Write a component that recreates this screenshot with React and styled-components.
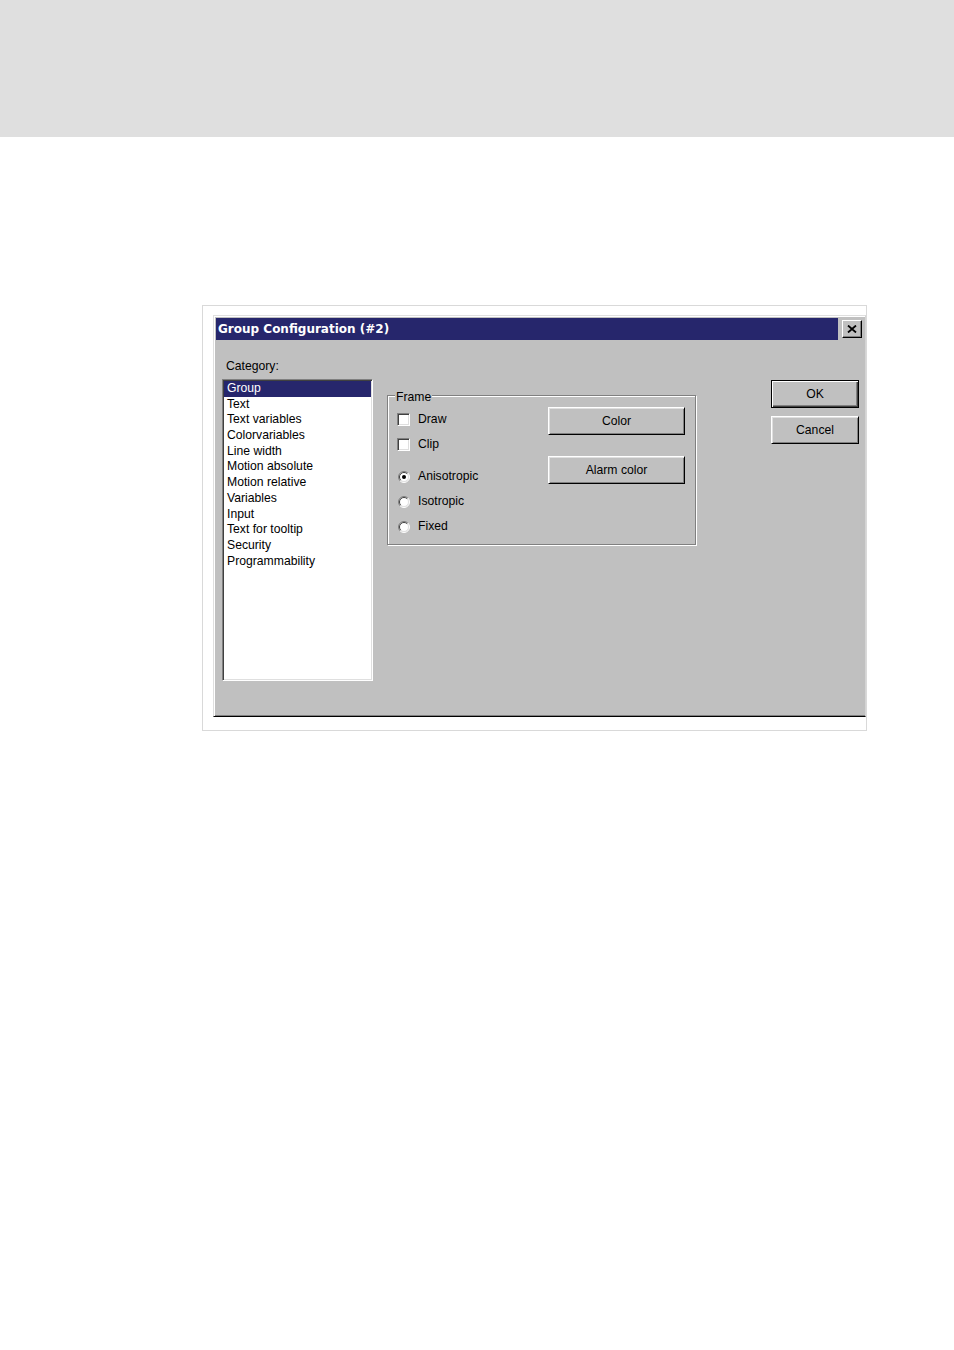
import React from "react";
import styled, { createGlobalStyle } from "styled-components";

const GlobalStyle = createGlobalStyle`
  body {
    margin: 0;
    background: #ffffff;
    font-family: "Liberation Sans", Arial, sans-serif;
  }
`;

// grey band across the top of the page
const Header = styled.div`
  height: 137px;
  background: #dfdfdf;
`;

// the thin frame round the screenshot
const Figure = styled.div`
  margin: 168px 0 0 202px;
  width: 665px;
  box-sizing: border-box;
  border: 1px solid #d9d9d9;
  padding: 9px 0 13px 10px;
`;

const Dialog = styled.div`
  width: 653px;
  height: 402px;
  box-sizing: border-box;
  padding: 2px 2px 1px 2px;
  background: #c0c0c0;
  border: 1px solid;
  border-color: #dfdfdf #d4d4d4 #000 #dfdfdf;
  box-shadow: inset 1px 1px 0 #fff, inset 0 -1px 0 #808080;
`;

const TitleRow = styled.div`
  display: flex;
  align-items: center;
  height: 22px;
  gap: 4px;
`;

const TitleBar = styled.div`
  flex: 1;
  height: 22px;
  line-height: 22px;
  padding-left: 2px;
  background: #26266c;
  color: #fff;
  font-family: "DejaVu Sans", Verdana, sans-serif;
  font-weight: bold;
  font-size: 12px;
`;

const CloseBox = styled.div`
  width: 20px;
  height: 18px;
  margin-right: 1px;
  box-sizing: border-box;
  display: flex;
  align-items: center;
  justify-content: center;
  border: 1px solid;
  border-color: #fff #000 #000 #fff;
  box-shadow: inset -1px -1px 0 #808080;
`;

const Body = styled.div`
  display: flex;
  align-items: flex-start;
  padding: 18px 0 0 6px;
`;

const LeftCol = styled.div`
  width: 151px;
  display: flex;
  flex-direction: column;
  gap: 5px;
`;

const Text = styled.span`
  font-size: 12.2px;
  line-height: 15px;
  color: #000;
`;

const CategoryLabel = styled(Text)`
  padding-left: 4px;
  height: 15px;
  margin-top: 1px;
`;

const ListBox = styled.div`
  height: 302px;
  box-sizing: border-box;
  background: #fff;
  padding: 1px 1px 0;
  border: 1px solid;
  border-color: #808080 #fff #fff #808080;
  box-shadow: inset 1px 1px 0 #404040, inset -1px -1px 0 #dfdfdf;
`;

const ListItem = styled.div`
  height: 15.7px;
  line-height: 15.7px;
  padding-left: 3px;
  font-size: 12.2px;
  color: ${(p) => (p.$selected ? "#fff" : "#000")};
  background: ${(p) => (p.$selected ? "#26266c" : "transparent")};
  white-space: nowrap;
`;

const GroupBox = styled.div`
  margin: 37px 0 0 14px;
  width: 309px;
  box-sizing: border-box;
  border: 1px solid #808080;
  box-shadow: inset 1px 1px 0 #fff, 1px 1px 0 #fff;
  padding: 0 0 5px 9px;
`;

const Legend = styled(Text)`
  display: table;
  margin: -6px 0 0 -2px;
  padding: 0 1px;
  background: #c0c0c0;
`;

const GroupGrid = styled.div`
  display: grid;
  grid-template-columns: 151px 137px;
  margin-top: 2px;
`;

const Options = styled.div`
  display: flex;
  flex-direction: column;
`;

const OptionRow = styled.div`
  height: 25px;
  display: flex;
  align-items: center;
  gap: 8px;
  margin-top: ${(p) => (p.$spaced ? "7px" : "0")};
`;

const CheckBox = styled.span`
  flex-shrink: 0;
  width: 13px;
  height: 13px;
  box-sizing: border-box;
  background: #fff;
  border: 1px solid;
  border-color: #808080 #fff #fff #808080;
  box-shadow: inset 1px 1px 0 #404040, inset -1px -1px 0 #dfdfdf;
`;

const RadioSvg = styled.svg`
  flex-shrink: 0;
  display: block;
  margin-left: 1px;
`;

const Radio = ({ checked }) => (
  <RadioSvg width="12" height="12" viewBox="0 0 12 12">
    <circle cx="6" cy="6" r="5" fill="#fff" />
    <path d="M2.1 9.9 A5.5 5.5 0 0 1 9.9 2.1" fill="none" stroke="#808080" />
    <path d="M9.9 2.1 A5.5 5.5 0 0 1 2.1 9.9" fill="none" stroke="#fff" />
    <path d="M2.8 9.2 A4.5 4.5 0 0 1 9.2 2.8" fill="none" stroke="#404040" />
    <path d="M9.2 2.8 A4.5 4.5 0 0 1 2.8 9.2" fill="none" stroke="#dfdfdf" />
    {checked && <circle cx="6" cy="6" r="2" fill="#000" />}
  </RadioSvg>
);

const ButtonStack = styled.div`
  display: flex;
  flex-direction: column;
  gap: ${(p) => p.$gap}px;
`;

const Button = styled.div`
  width: ${(p) => p.$width}px;
  height: 28px;
  box-sizing: border-box;
  display: flex;
  align-items: center;
  justify-content: center;
  font-size: 12.2px;
  color: #000;
  border: 1px solid;
  border-color: ${(p) => (p.$default ? "#000" : "#fff #000 #000 #fff")};
  box-shadow: ${(p) =>
    p.$default
      ? "inset 1px 1px 0 #fff, inset -1px -1px 0 #404040, inset -2px -2px 0 #808080"
      : "inset 1px 1px 0 #dfdfdf, inset -1px -1px 0 #808080"};
`;

const DialogButtons = styled(ButtonStack)`
  margin: 22px 0 0 75px;
`;

const categories = [
  "Group",
  "Text",
  "Text variables",
  "Colorvariables",
  "Line width",
  "Motion absolute",
  "Motion relative",
  "Variables",
  "Input",
  "Text for tooltip",
  "Security",
  "Programmability",
];

const CloseIcon = () => (
  <svg width="10" height="8" viewBox="0 0 10 8">
    <path d="M1 0.5 L9 7.5 M9 0.5 L1 7.5" stroke="#000" strokeWidth="1.8" />
  </svg>
);

export default function App() {
  return (
    <>
      <GlobalStyle />
      <Header />
      <Figure>
        <Dialog>
          <TitleRow>
            <TitleBar>Group Configuration (#2)</TitleBar>
            <CloseBox>
              <CloseIcon />
            </CloseBox>
          </TitleRow>
          <Body>
            <LeftCol>
              <CategoryLabel>Category:</CategoryLabel>
              <ListBox>
                {categories.map((c, i) => (
                  <ListItem key={c} $selected={i === 0}>
                    {c}
                  </ListItem>
                ))}
              </ListBox>
            </LeftCol>
            <GroupBox>
              <Legend>Frame</Legend>
              <GroupGrid>
                <Options>
                  <OptionRow>
                    <CheckBox />
                    <Text>Draw</Text>
                  </OptionRow>
                  <OptionRow>
                    <CheckBox />
                    <Text>Clip</Text>
                  </OptionRow>
                  <OptionRow $spaced>
                    <Radio checked />
                    <Text>Anisotropic</Text>
                  </OptionRow>
                  <OptionRow>
                    <Radio />
                    <Text>Isotropic</Text>
                  </OptionRow>
                  <OptionRow>
                    <Radio />
                    <Text>Fixed</Text>
                  </OptionRow>
                </Options>
                <ButtonStack $gap={21}>
                  <Button $width={137}>Color</Button>
                  <Button $width={137}>Alarm color</Button>
                </ButtonStack>
              </GroupGrid>
            </GroupBox>
            <DialogButtons $gap={8}>
              <Button $width={88} $default>
                OK
              </Button>
              <Button $width={88}>Cancel</Button>
            </DialogButtons>
          </Body>
        </Dialog>
      </Figure>
    </>
  );
}
